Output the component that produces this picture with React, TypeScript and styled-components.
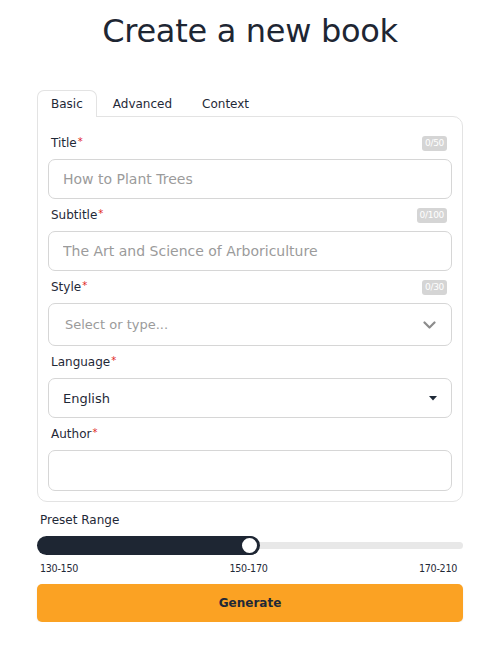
import React from 'react';
import styled, { createGlobalStyle } from 'styled-components';

const GlobalStyle = createGlobalStyle`
  html, body {
    margin: 0;
    padding: 0;
    background: #ffffff;
  }
  body {
    font-family: 'DejaVu Sans', 'Noto Sans', sans-serif;
    color: #1f2937;
  }
`;

const Page = styled.div`
  width: 426px;
  margin-left: 37px;
  padding-top: 11px;
`;

const Heading = styled.h1`
  margin: 0 0 39px 0;
  text-align: center;
  font-size: 32px;
  line-height: 40px;
  font-weight: 400;
  color: #1e2633;
  letter-spacing: -0.3px;
`;

const TabBar = styled.div`
  display: flex;
  align-items: flex-end;
  height: 26px;
`;

const Tab = styled.div<{ $active?: boolean }>`
  box-sizing: border-box;
  height: ${({ $active }) => ($active ? '27px' : '26px')};
  padding: 0 13px;
  margin-right: 2px;
  display: flex;
  align-items: center;
  font-size: 12px;
  color: #1f2937;
  border: 1px solid ${({ $active }) => ($active ? '#e3e3e3' : 'transparent')};
  border-bottom: none;
  border-radius: 7px 7px 0 0;
  background: ${({ $active }) => ($active ? '#ffffff' : 'transparent')};
  position: relative;
  z-index: ${({ $active }) => ($active ? 1 : 0)};
  margin-bottom: ${({ $active }) => ($active ? '-1px' : '0')};
`;

const Panel = styled.div`
  box-sizing: border-box;
  border: 1px solid #e3e3e3;
  border-radius: 0 10px 10px 10px;
  padding: 16px 10px 10px 10px;
  display: flex;
  flex-direction: column;
  gap: 6px;
`;

const LabelRow = styled.div`
  height: 20px;
  display: flex;
  align-items: center;
  justify-content: space-between;
  padding: 0 5px 0 3px;
`;

const Label = styled.label`
  font-size: 12px;
  font-weight: 500;
  color: #1f2937;
`;

const Star = styled.span`
  color: #e02424;
  font-size: 10px;
  vertical-align: top;
  margin-left: 1px;
`;

const Counter = styled.span`
  background: #d5d5d5;
  color: #ffffff;
  font-size: 9px;
  line-height: 15px;
  height: 15px;
  padding: 0 3px;
  border-radius: 3px;
  letter-spacing: -0.3px;
`;

const TextInput = styled.input<{ $h?: number }>`
  box-sizing: border-box;
  width: 100%;
  height: ${({ $h }) => $h ?? 40}px;
  border: 1px solid #d6d6d6;
  border-radius: 7px;
  padding: 0 14px;
  font-family: inherit;
  font-size: 14px;
  color: #1f2937;
  outline: none;
  &::placeholder {
    color: #9b9b9b;
  }
`;

const SelectBox = styled.div<{ $h: number }>`
  box-sizing: border-box;
  height: ${({ $h }) => $h}px;
  border: 1px solid #d6d6d6;
  border-radius: 7px;
  padding: 0 14px 0 16px;
  display: flex;
  align-items: center;
  justify-content: space-between;
  font-size: 13px;
`;

const Placeholder = styled.span`
  color: #9b9b9b;
`;

const Value = styled.span`
  color: #1f2937;
  margin-left: -2px;
`;

const RangeSection = styled.div`
  margin-top: 8px;
`;

const RangeLabel = styled.div`
  height: 20px;
  display: flex;
  align-items: center;
  padding-left: 3px;
  font-size: 12px;
  color: #1f2937;
`;

const Slider = styled.div`
  position: relative;
  height: 19px;
  margin-top: 6px;
  display: flex;
  align-items: center;
`;

const Track = styled.div`
  width: 100%;
  height: 7px;
  background: #e8e8e8;
  border-radius: 4px;
`;

const Fill = styled.div`
  position: absolute;
  left: 0;
  top: 0;
  height: 19px;
  background: #1e2633;
  border-radius: 10px;
`;

const Thumb = styled.div`
  position: absolute;
  top: 0;
  box-sizing: border-box;
  width: 19px;
  height: 19px;
  margin-left: -10px;
  border-radius: 50%;
  background: #ffffff;
  border: 2px solid #1e2633;
`;

const Ticks = styled.div`
  display: flex;
  justify-content: space-between;
  padding: 0 6px 0 3px;
  margin-top: 6px;
  font-size: 9.6px;
  line-height: 16px;
  color: #1f2937;
  letter-spacing: -0.3px;
`;

const GenerateButton = styled.button`
  box-sizing: border-box;
  width: 100%;
  height: 38px;
  margin-top: 7px;
  border: none;
  border-radius: 5px;
  background: #fba223;
  font-family: inherit;
  font-size: 12px;
  font-weight: 700;
  color: #1f2937;
  box-shadow: 0 1px 2px rgba(0, 0, 0, 0.08);
`;

const Chevron = () => (
  <svg width="13" height="8" viewBox="0 0 13 8" fill="none" style={{ marginRight: 1 }}>
    <path d="M1.5 1.5 L6.5 6.5 L11.5 1.5" stroke="#8c8c8c" strokeWidth="2.2" strokeLinecap="round" strokeLinejoin="round" />
  </svg>
);

const Caret = () => (
  <svg width="8" height="5" viewBox="0 0 8 5">
    <path d="M0 0 H8 L4 4.5 Z" fill="#1f2937" />
  </svg>
);

type FieldProps = {
  label: string;
  counter?: string;
  children: React.ReactNode;
};

const Field = ({ label, counter, children }: FieldProps) => (
  <>
    <LabelRow>
      <Label>
        {label}
        <Star>*</Star>
      </Label>
      {counter && <Counter>{counter}</Counter>}
    </LabelRow>
    {children}
  </>
);

const App = () => {
  const value = 0.5;
  return (
    <>
      <GlobalStyle />
      <Page>
        <Heading>Create a new book</Heading>
        <TabBar>
          <Tab $active>Basic</Tab>
          <Tab>Advanced</Tab>
          <Tab>Context</Tab>
        </TabBar>
        <Panel>
          <Field label="Title" counter="0/50">
            <TextInput placeholder="How to Plant Trees" />
          </Field>
          <Field label="Subtitle" counter="0/100">
            <TextInput placeholder="The Art and Science of Arboriculture" />
          </Field>
          <Field label="Style" counter="0/30">
            <SelectBox $h={43}>
              <Placeholder>Select or type...</Placeholder>
              <Chevron />
            </SelectBox>
          </Field>
          <Field label="Language">
            <SelectBox $h={40}>
              <Value>English</Value>
              <Caret />
            </SelectBox>
          </Field>
          <Field label="Author">
            <TextInput $h={41} />
          </Field>
        </Panel>
        <RangeSection>
          <RangeLabel>Preset Range</RangeLabel>
          <Slider>
            <Track />
            <Fill style={{ width: `calc(${value * 100}% + 10px)` }} />
            <Thumb style={{ left: `${value * 100}%` }} />
          </Slider>
          <Ticks>
            <span>130-150</span>
            <span>150-170</span>
            <span>170-210</span>
          </Ticks>
          <GenerateButton>Generate</GenerateButton>
        </RangeSection>
      </Page>
    </>
  );
};

export default App;
